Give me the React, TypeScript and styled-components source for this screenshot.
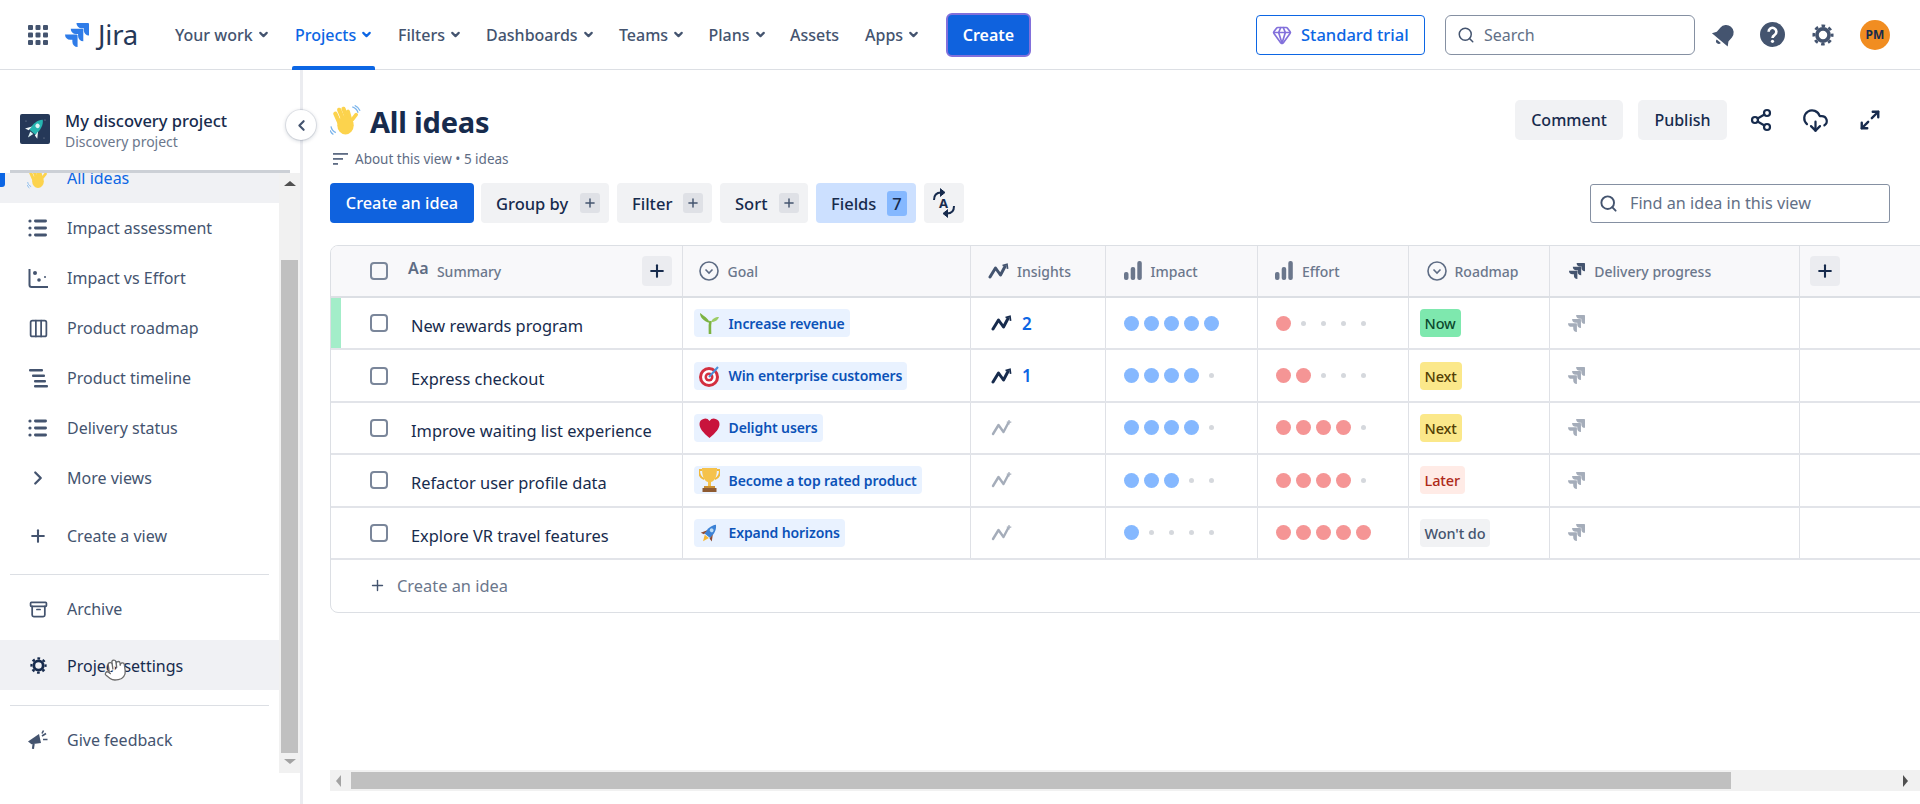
import React from 'react';
import styled, { createGlobalStyle } from 'styled-components';
import { Archive, ChevronDown, ChevronLeft, ChevronRight, CloudDownload, Columns3, Gem, Hand, Maximize2, Plus, Search, Share2 } from 'lucide-react';

const Global = createGlobalStyle`
  html, body { margin: 0; padding: 0; height: 100%; background: #fff; }
  body { font-family: "Noto Sans", "Open Sans", sans-serif; color: #172b4d; overflow: hidden; }
  * { box-sizing: border-box; }
`;

const Page = styled.div`display: flex; flex-direction: column; height: 100vh; overflow: hidden;`;

/* ---------- top bar ---------- */
const TopBar = styled.header`
  display: flex; align-items: center; height: 70px; flex: none; padding: 0 30px 0 28px;
  border-bottom: 1px solid #dcdfe4;
`;
const BrandBox = styled.div`display: flex; align-items: center; width: 144px; flex: none;`;
const JiraWord = styled.span`font-size: 27.5px; color: #253858; margin-left: 9px; letter-spacing: -0.2px;`;
const NavItem = styled.div<{ $w: number; $active?: boolean }>`
  position: relative; display: flex; align-items: center; gap: 4px; height: 70px; width: ${p => p.$w}px; flex: none;
  padding-left: 3px; font-size: 16px; font-weight: 500; letter-spacing: 0;
  color: ${p => (p.$active ? '#0c66e4' : '#44546f')};
  &::after {
    content: ''; display: ${p => (p.$active ? 'block' : 'none')};
    position: absolute; left: 0; bottom: 0; width: 83px; height: 4px; background: #0c66e4; border-radius: 2px 2px 0 0;
  }
`;
const CreateButton = styled.button`
  width: 85px; height: 44px; flex: none; border: 2px solid #8270db; border-radius: 6px; background: #0f62de; color: #fff;
  font: 600 16px "Noto Sans", sans-serif;
`;
const TrialButton = styled.button`
  display: flex; align-items: center; gap: 9px; width: 169px; height: 40px; margin-left: auto; padding: 0 0 0 15px; background: #fff;
  border: 1px solid #0c66e4; border-radius: 4px; color: #0c66e4; font: 500 16.5px "Noto Sans", sans-serif;
`;
const GlobalSearch = styled.div`
  display: flex; align-items: center; gap: 9px; width: 250px; height: 40px; margin-left: 20px; padding-left: 11px;
  border: 1px solid #8590a2; border-radius: 6px; font-size: 16px; color: #626f86;
`;
const TopIcons = styled.div`display: flex; align-items: center; margin-left: 18px;`;
const TopIconBox = styled.span<{ $w: number }>`display: flex; align-items: center; width: ${p => p.$w}px; flex: none;`;
const Avatar = styled.span`
  display: flex; align-items: center; justify-content: center; width: 30px; height: 30px; border-radius: 50%;
  background: #f18d21; color: #172b4d; font-size: 12px; font-weight: 700;
`;

/* ---------- sidebar ---------- */
const Body = styled.div`display: flex; flex: 1; min-height: 0;`;
const Sidebar = styled.aside`
  position: relative; display: flex; flex-direction: column; width: 303px; flex: none; border-right: 3px solid #ebecf0;
`;
const ProjectHeader = styled.div`
  display: flex; align-items: flex-start; gap: 15px; height: 100px; flex: none; padding: 44px 0 0 20px;
`;
const ProjectText = styled.div`display: flex; flex-direction: column; margin-top: -5px;`;
const ProjectName = styled.span`font-size: 16.5px; font-weight: 500; line-height: 24px; color: #172b4d;`;
const ProjectKind = styled.span`font-size: 14px; line-height: 18px; color: #6b778c;`;
const HeaderShadow = styled.div`height: 3px; flex: none; margin: 0 10px; background: #ccd0d6;`;
const SideScroll = styled.div`display: flex; height: 600px; flex: none;`;
const SideList = styled.nav`width: 279px; flex: none; overflow: hidden;`;
const SideInner = styled.div`margin-top: -20px;`;
const SideRow = styled.div<{ $active?: boolean; $hover?: boolean; $mt?: number }>`
  position: relative; display: flex; align-items: center; height: 50px; padding-left: 26px; margin-top: ${p => p.$mt ?? 0}px;
  background: ${p => (p.$active || p.$hover ? '#f0f1f4' : 'transparent')};
  color: ${p => (p.$active ? '#0c66e4' : p.$hover ? '#172b4d' : '#44546f')};
  font-size: 16px;
  &::before {
    content: ''; display: ${p => (p.$active ? 'block' : 'none')};
    position: absolute; left: 0; top: 16px; width: 5px; height: 18px; background: #0c66e4; border-radius: 0 3px 3px 0;
  }
`;
const SideIcon = styled.span`display: flex; align-items: center; justify-content: center; width: 24px; margin-right: 17px; flex: none;`;
const SideLabel = styled.span<{ $dy?: number }>`margin-top: ${p => p.$dy ?? 0}px;`;
const Divider = styled.div<{ $mt: number }>`height: 1px; margin: ${p => p.$mt}px 10px 9px; background: #dcdfe4;`;
const Cursor = styled.span`position: absolute; left: 103px; top: 18px; display: flex; transform: rotate(-8deg);`;
const VTrack = styled.div`
  display: flex; flex-direction: column; align-items: center; width: 21px; flex: none; background: #f1f1f1;
`;
const ArrowUp = styled.span`margin: 8px 0 0; width: 0; height: 0; border: 6px solid transparent; border-top: 0; border-bottom: 5px solid #505050;`;
const ArrowDown = styled.span`width: 0; height: 0; margin-top: 6px; border: 6px solid transparent; border-bottom: 0; border-top: 5px solid #a3a3a3;`;
const VThumb = styled.div`width: 17px; height: 493px; margin-top: 74px; background: #c0c0c0;`;
const CollapseButton = styled.button`
  position: absolute; left: 286px; top: 40px; display: flex; align-items: center; justify-content: center; padding: 0;
  width: 30px; height: 30px; border-radius: 50%; background: #fff; border: 0; color: #44546f;
  box-shadow: 0 0 0 1px rgba(9,30,66,.08), 0 1px 4px rgba(9,30,66,.22);
`;

/* ---------- main ---------- */
const Main = styled.main`display: flex; flex-direction: column; flex: 1; min-width: 0; overflow: hidden; padding-left: 27px;`;
const TitleRow = styled.div`display: flex; align-items: center; margin-top: 30px; height: 40px; flex: none; padding-right: 28px;`;
const Title = styled.h1`margin: 2px 0 0 9px; font-size: 29px; font-weight: 700; color: #172b4d; letter-spacing: -0.2px;`;
const TitleActions = styled.div`display: flex; align-items: center; margin-left: auto;`;
const GreyButton = styled.button<{ $w: number; $mr: number }>`
  width: ${p => p.$w}px; height: 40px; margin-right: ${p => p.$mr}px; border: 0; border-radius: 5px; background: #f1f2f4; color: #172b4d;
  font: 500 16px "Noto Sans", sans-serif; padding: 0;
`;
const ActionIcon = styled.span<{ $w: number }>`display: flex; justify-content: center; width: ${p => p.$w}px; flex: none; color: #172b4d;`;
const AboutRow = styled.div`display: flex; align-items: center; gap: 7px; height: 20px; margin: 9px 0 0 3px; flex: none; font-size: 13.5px; color: #5e6c84;`;
const Toolbar = styled.div`display: flex; align-items: center; height: 40px; margin-top: 14px; flex: none; padding-right: 31px;`;
const PrimaryButton = styled.button`
  width: 144px; height: 40px; margin-right: 7px; border: 0; border-radius: 4px; background: #0f62de; color: #fff;
  font: 500 16.3px "Noto Sans", sans-serif; padding: 0;
`;
const ToolButton = styled.button<{ $w: number; $on?: boolean }>`
  display: flex; align-items: center; justify-content: space-between; width: ${p => p.$w}px; height: 40px; margin-right: 8px; padding: 0 9px 0 15px;
  border: 0; border-radius: 4px; background: ${p => (p.$on ? '#cce0ff' : '#f1f2f4')}; color: #172b4d;
  font: 500 16.5px "Noto Sans", sans-serif;
`;
const PlusBox = styled.span`display: flex; align-items: center; justify-content: center; width: 20px; height: 20px; border-radius: 3px; background: #dfe1e6; color: #44546f;`;
const CountBox = styled.span`display: flex; align-items: center; justify-content: center; width: 20px; height: 25px; border-radius: 3px; background: #85b8ff; color: #172b4d;`;
const IconTool = styled.button`
  display: flex; align-items: center; justify-content: center; width: 40px; height: 40px; padding: 0; border: 0; border-radius: 4px; background: #f1f2f4; color: #172b4d;
`;
const FindBox = styled.div`
  display: flex; align-items: center; gap: 12px; width: 300px; height: 39px; margin-left: auto; padding-left: 8px; margin-right: -1px;
  border: 1px solid #8590a2; border-radius: 3px; font-size: 16.2px; color: #626f86;
`;

/* ---------- table ---------- */
const Table = styled.section`
  width: 1620px; flex: none; margin-top: 22px; border: 1px solid #dcdfe4; border-radius: 8px 0 0 8px; overflow: hidden;
`;
const columns = '351.5px 288.5px 134.5px 152.5px 150.5px 141.7px 250px 1fr';
const HeadRow = styled.div`
  display: grid; grid-template-columns: ${columns}; height: 52px; background: #f8f8fa; border-bottom: 2px solid #dcdfe4;
`;
const DataRow = styled.div`
  display: grid; grid-template-columns: ${columns}; height: 52.4px; border-bottom: 2px solid #e2e4e9;
`;
const Cell = styled.div<{ $pl: number; $bar?: boolean }>`
  display: flex; align-items: center; min-width: 0; padding-left: ${p => p.$pl}px; border-right: 1px solid #dfe1e6;
  box-shadow: ${p => (p.$bar ? 'inset 10px 0 0 #a3edc9' : 'none')};
  &:last-child { border-right: 0; }
`;
const HeadCell = styled(Cell)<{ $gap: number }>`
  gap: ${p => p.$gap}px; font-size: 14px; font-weight: 500; color: #6b778c;
`;
const Check = styled.span`display: block; width: 18px; height: 18px; flex: none; border: 2px solid #7a869a; border-radius: 4px;`;
const AaMark = styled.span`margin-left: 20px; margin-top: -6px; font-size: 16px; font-weight: 600; color: #5e6c84; letter-spacing: 0.4px;`;
const HeadSpacer = styled.span`margin-left: auto;`;
const AddBox = styled.span<{ $mr: number }>`
  display: flex; align-items: center; justify-content: center; width: 30px; height: 30px; flex: none; margin-right: ${p => p.$mr}px; border-radius: 4px; background: #ebecf0; color: #172b4d;
`;
const IdeaTitle = styled.span`margin: 5px 0 0 23px; font-size: 16.4px; color: #172b4d; white-space: nowrap;`;
const GoalChip = styled.span`
  display: inline-flex; align-items: center; gap: 9px; height: 28px; padding: 0 5px; border-radius: 4px; background: #e9f2ff;
  color: #0c52b8; font-size: 14px; font-weight: 600; white-space: nowrap; letter-spacing: -0.1px;
`;
const InsightNum = styled.span`margin-left: 10px; font-size: 17px; font-weight: 600; color: #0c66e4;`;
const Dots = styled.div`display: flex;`;
const DotSlot = styled.span`display: flex; align-items: center; justify-content: center; width: 20px; height: 20px;`;
const Dot = styled.span<{ $on: boolean; $c: string }>`
  display: block; width: ${p => (p.$on ? 15 : 5)}px; height: ${p => (p.$on ? 15 : 5)}px; border-radius: 50%;
  background: ${p => (p.$on ? p.$c : '#d5d8dd')};
`;
const Lozenge = styled.span<{ $bg: string; $fg: string }>`
  display: inline-flex; align-items: center; height: 28px; padding: 0 5px; border-radius: 4px; background: ${p => p.$bg}; color: ${p => p.$fg};
  font-size: 14.5px; font-weight: 500; white-space: nowrap; letter-spacing: -0.1px;
`;
const CreateRow = styled.div`display: flex; align-items: center; gap: 11px; height: 52px; padding-left: 38px; font-size: 16.4px; color: #6b778c;`;

const HScroll = styled.div`
  display: flex; align-items: center; height: 21px; margin-top: auto; margin-bottom: 13px; flex: none; background: #f1f1f1; padding-left: 6px;
`;
const ArrowLeft = styled.span`width: 0; height: 0; border: 6px solid transparent; border-left: 0; border-right: 5px solid #a3a3a3;`;
const HThumb = styled.div`width: 1380px; height: 17px; margin-left: 10px; background: #c0c0c0;`;
const ArrowRight = styled.span`width: 0; height: 0; margin-left: auto; margin-right: 12px; border: 6px solid transparent; border-right: 0; border-left: 5px solid #505050;`;

/* ---------- drawn icons ---------- */
const JIRA_PATH = 'M11.571 11.513H0a5.218 5.218 0 0 0 5.232 5.215h2.13v2.057A5.215 5.215 0 0 0 12.575 24V12.518a1.005 1.005 0 0 0-1.005-1.005zm5.723-5.756H5.736a5.215 5.215 0 0 0 5.215 5.214h2.129v2.058a5.218 5.218 0 0 0 5.215 5.214V6.758a1.001 1.001 0 0 0-1.001-1.001zM23.013 0H11.455a5.215 5.215 0 0 0 5.215 5.215h2.129v2.057A5.215 5.215 0 0 0 24 12.483V1.005A1.001 1.001 0 0 0 23.013 0Z';
const JiraMark = ({ s, c }: { s: number; c: string }) => (
  <svg width={s} height={s} viewBox="0 0 24 24"><path d={JIRA_PATH} fill={c} /></svg>
);
const Waffle = () => (
  <svg width="20" height="20" viewBox="0 0 20 20" fill="#44546f">
    {[0, 7.5, 15].flatMap(y => [0, 7.5, 15].map(x => <rect key={`${x}-${y}`} x={x} y={y} width="5" height="5" rx="1" />))}
  </svg>
);
const Bell = () => (
  <svg width="26" height="28" viewBox="0 0 24 24" fill="#44546f" style={{ marginLeft: -2 }}>
    <g transform="rotate(40 12 12)">
      <path d="M12 2a7 7 0 0 0-7 7v5l-2.500 4h19L19 14V9a7 7 0 0 0-7-7z" />
      <path d="M9.500 19.500h5a2.500 2.500 0 0 1-5 0z" />
    </g>
  </svg>
);
const Help = () => (
  <svg width="25" height="25" viewBox="0 0 25 25">
    <circle cx="12.500" cy="12.500" r="12.500" fill="#44546f" />
    <path d="M8.600 9.800a3.900 3.900 0 1 1 6 3.200c-1.300.9-2.100 1.400-2.100 3" fill="none" stroke="#fff" strokeWidth="2.600" />
    <circle cx="12.500" cy="19.300" r="1.600" fill="#fff" />
  </svg>
);
const Gear = ({ s, c }: { s: number; c: string }) => (
  <svg width={s} height={s} viewBox="0 0 24 24" fill="none" stroke={c}>
    <circle cx="12" cy="12" r="6.600" strokeWidth="4" />
    <circle cx="12" cy="12" r="10" strokeWidth="3" strokeDasharray="3.93 3.93" strokeDashoffset="1.96" />
  </svg>
);
const ListIcon = () => (
  <svg width="20" height="20" viewBox="0 0 20 20" fill="#44546f">
    {[3, 10, 17].map(y => (
      <g key={y}>
        <circle cx="2" cy={y} r="1.600" />
        <rect x="6" y={y - 1.5} width="13" height="3" rx="1.400" />
      </g>
    ))}
  </svg>
);
const ScatterIcon = () => (
  <svg width="21" height="21" viewBox="0 0 21 21" fill="#44546f">
    <path d="M1.500 1v16a2 2 0 0 0 2 2H20" fill="none" stroke="#44546f" strokeWidth="2" />
    <circle cx="7" cy="5" r="2" /><circle cx="11" cy="12" r="1.800" /><circle cx="17" cy="9" r="1" />
  </svg>
);
const TimelineIcon = () => (
  <svg width="21" height="20" viewBox="0 0 21 20" fill="#44546f">
    <rect x="1" y="1" width="14" height="2.400" rx="1" /><rect x="4" y="6.500" width="13" height="2.400" rx="1" />
    <rect x="6" y="12" width="12" height="2.400" rx="1" /><rect x="6" y="17" width="14" height="2.400" rx="1" />
  </svg>
);
const Megaphone = () => (
  <svg width="20" height="20" viewBox="0 0 20 20" fill="#44546f">
    <path d="M0 11.500L11 4l2 9-9.500 1.200z" />
    <path d="M4.500 14l-.6 4.800 2.100.2.7-5z" />
    <path d="M14 6l4-2.500M15 9.500h4.500M14 3.500l1.500-3" stroke="#44546f" strokeWidth="1.600" fill="none" />
  </svg>
);
const Insight = ({ c, plus }: { c: string; plus?: boolean }) => (
  <svg width="21" height="20" viewBox="0 0 21 20" fill="none" stroke={c} strokeWidth={plus ? 2.4 : 3}>
    <path d="M2 16L7.500 7l5 7L17 5.500" strokeLinejoin="round" strokeLinecap="round" />
    {plus ? <path d="M18 2v4.500M15.800 4.200h4.500" strokeWidth="1.300" /> : <path d="M14.500 4.500l4.500-1.200.6 4.500" strokeWidth="1.700" />}
  </svg>
);
const BarsIcon = () => (
  <svg width="18" height="20" viewBox="0 0 18 20" fill="#6b778c">
    <rect x="0" y="11" width="4.500" height="8" rx="2" /><rect x="6.700" y="6" width="4.500" height="13" rx="2" /><rect x="13.300" y="0" width="4.500" height="19" rx="2" />
  </svg>
);
const SelectIcon = () => (
  <svg width="20" height="20" viewBox="0 0 20 20" fill="none" stroke="#5e6c84" strokeWidth="1.600">
    <circle cx="10" cy="10" r="9" /><path d="M6.500 8.500L10 12l3.500-3.500" />
  </svg>
);
const SortAz = () => (
  <svg width="26" height="30" viewBox="0 0 26 30" fill="none" stroke="#172b4d" strokeWidth="2">
    <path d="M3 12C3 7 6 4.500 10 4.500" /><path d="M9 .5l5 4-5 4" fill="#172b4d" strokeWidth="1" />
    <path d="M23 18c0 5-3 7.500-7 7.500" /><path d="M17 21.500l-5 4 5 4" fill="#172b4d" strokeWidth="1" />
    <text x="8" y="20" fontSize="13" fontWeight="700" fontFamily="Noto Sans" fill="#172b4d" stroke="none">A</text>
  </svg>
);
const Hamburger = () => (
  <svg width="15" height="12" viewBox="0 0 15 12" fill="#5e6c84">
    <rect width="15" height="1.800" /><rect y="5" width="10" height="1.800" /><rect y="10" width="5" height="1.800" />
  </svg>
);
const WaveHand = ({ s }: { s: number }) => (
  <svg width={s} height={s} viewBox="0 0 32 32">
    <g stroke="#fcd34d" strokeWidth="4.400" strokeLinecap="round">
      <path d="M10 19L5.500 9" /><path d="M14 16L9.500 5" /><path d="M18 15L14 4" /><path d="M21 16L18.500 7" />
    </g>
    <ellipse cx="16" cy="21" rx="8.500" ry="9.500" fill="#fcd34d" />
    <path d="M23 15l4-5" stroke="#fcd34d" strokeWidth="3.800" strokeLinecap="round" />
    <path d="M23 2c3 1 5 3 6 6M25.500.5c2.500 1 4.500 3 5.500 5.500M1 22c.5 3 2 5 5 6.500M0 26c.8 2 2 3.500 3.500 4.500" stroke="#7cb5ec" strokeWidth="1.300" fill="none" />
  </svg>
);
const ProjectLogo = () => (
  <svg width="30" height="30" viewBox="0 0 30 30">
    <rect width="30" height="30" rx="2" fill="#253858" />
    <g transform="rotate(40 15 15)">
      <path d="M15 3c4 3.500 5 9 4 16h-8c-1-7 0-12.500 4-16z" fill="#26b5b0" />
      <circle cx="15" cy="11" r="2.200" fill="#dff5f5" />
      <path d="M11 15l-4 6 4-1zM19 15l4 6-4-1z" fill="#eef6f8" />
      <path d="M13 20h4l-2 6z" fill="#dff5f5" />
    </g>
    <circle cx="6" cy="7" r=".6" fill="#8993a4" /><circle cx="24" cy="24" r=".6" fill="#8993a4" /><circle cx="25" cy="6" r=".6" fill="#8993a4" />
  </svg>
);
const Seedling = () => (
  <svg width="21" height="24" viewBox="0 0 21 24" fill="none">
    <path d="M11 23c0-6-.5-9 .5-13" stroke="#7cb342" strokeWidth="2.600" />
    <path d="M11 12C9 7 5 5 1 2c0 4 3 8 10 10z" fill="#7cb342" />
    <path d="M12 11c1-3 4-5 8-5-1 3-4 5-8 5z" fill="#9ccc65" />
  </svg>
);
const Target = () => (
  <svg width="21" height="22" viewBox="0 0 21 22">
    <circle cx="10" cy="12" r="10" fill="#d32f3f" /><circle cx="10" cy="12" r="7" fill="#fff" />
    <circle cx="10" cy="12" r="4.500" fill="#d32f3f" /><circle cx="10" cy="12" r="2" fill="#fff" />
    <path d="M10 12L19 2" stroke="#4a8fd8" strokeWidth="2" />
  </svg>
);
const Heart = () => (
  <svg width="21" height="22" viewBox="0 0 21 22">
    <path d="M10.500 21C4 15.500.5 11.500.5 7A5.500 5.500 0 0 1 10.500 4a5.500 5.500 0 0 1 10 3c0 4.500-3.500 8.500-10 14z" fill="#c8143c" />
  </svg>
);
const Trophy = () => (
  <svg width="21" height="25" viewBox="0 0 21 25">
    <path d="M3 2H0c0 5 2 8 5 9M18 2h3c0 5-2 8-5 9" fill="none" stroke="#f0b93c" strokeWidth="2" />
    <path d="M3 0h15c0 8-2 13-6 14v4H9v-4C5 13 3 8 3 0z" fill="#f5c24c" />
    <rect x="5" y="18" width="11" height="2" fill="#c98f33" /><rect x="3.500" y="20" width="14" height="4" fill="#8d5a32" />
  </svg>
);
const RocketEmoji = () => (
  <svg width="21" height="24" viewBox="0 0 24 24">
    <g transform="rotate(38 12 12)">
      <path d="M12 0c4 4 5 9 4 16H8C7 9 8 4 12 0z" fill="#3b82d6" />
      <circle cx="12" cy="8" r="2.200" fill="#bcdcf6" />
      <path d="M8 11l-4 7 4-1zM16 11l4 7-4-1z" fill="#8d4a32" />
      <path d="M9 17h6l-3 7z" fill="#f7b731" />
    </g>
  </svg>
);

const P = ({ s = 14 }: { s?: number }) => <Plus size={s} strokeWidth={2.5} />;
const NavChevron = () => <ChevronDown size={13} strokeWidth={4} />;

/* ---------- data ---------- */
type Idea = { title: string; goal: string; emoji: React.ReactNode; insights?: number; impact: number; effort: number; road: [string, string, string]; bar?: boolean };
const ideas: Idea[] = [
  { title: 'New rewards program', goal: 'Increase revenue', emoji: <Seedling />, insights: 2, impact: 5, effort: 1, road: ['Now', '#7ee8ae', '#0b4a2e'], bar: true },
  { title: 'Express checkout', goal: 'Win enterprise customers', emoji: <Target />, insights: 1, impact: 4, effort: 2, road: ['Next', '#fbe88a', '#533f04'] },
  { title: 'Improve waiting list experience', goal: 'Delight users', emoji: <Heart />, impact: 4, effort: 4, road: ['Next', '#fbe88a', '#533f04'] },
  { title: 'Refactor user profile data', goal: 'Become a top rated product', emoji: <Trophy />, impact: 3, effort: 4, road: ['Later', '#ffebe6', '#ae2a19'] },
  { title: 'Explore VR travel features', goal: 'Expand horizons', emoji: <RocketEmoji />, impact: 1, effort: 5, road: ["Won't do", '#f1f2f4', '#44546f'] },
];
const nav: [string, number, boolean][] = [
  ['Your work', 120, true], ['Projects', 103, true], ['Filters', 88, true], ['Dashboards', 133, true],
  ['Teams', 89.5, true], ['Plans', 81.5, true], ['Assets', 75, false], ['Apps', 84, true],
];
const DotRow = ({ n, c }: { n: number; c: string }) => (
  <Dots>{[0, 1, 2, 3, 4].map(i => <DotSlot key={i}><Dot $on={i < n} $c={c} /></DotSlot>)}</Dots>
);

export default function App() {
  return (
    <Page>
      <Global />
      <TopBar>
        <BrandBox>
          <Waffle />
          <span style={{ width: 17 }} />
          <JiraMark s={24} c="#2f7ce8" />
          <JiraWord>Jira</JiraWord>
        </BrandBox>
        {nav.map(([label, w, chev]) => (
          <NavItem key={label} $w={w} $active={label === 'Projects'}>{label}{chev && <NavChevron />}</NavItem>
        ))}
        <CreateButton>Create</CreateButton>
        <TrialButton><Gem size={20} color="#8270db" />Standard trial</TrialButton>
        <GlobalSearch><Search size={18} color="#44546f" />Search</GlobalSearch>
        <TopIcons>
          <TopIconBox $w={47}><Bell /></TopIconBox>
          <TopIconBox $w={52}><Help /></TopIconBox>
          <TopIconBox $w={48}><Gear s={22} c="#44546f" /></TopIconBox>
          <Avatar>PM</Avatar>
        </TopIcons>
      </TopBar>
      <Body>
        <Sidebar>
          <ProjectHeader>
            <ProjectLogo />
            <ProjectText>
              <ProjectName>My discovery project</ProjectName>
              <ProjectKind>Discovery project</ProjectKind>
            </ProjectText>
          </ProjectHeader>
          <HeaderShadow />
          <SideScroll>
            <SideList>
              <SideInner>
                <SideRow $active><SideIcon><WaveHand s={22} /></SideIcon>All ideas</SideRow>
                <SideRow><SideIcon><ListIcon /></SideIcon>Impact assessment</SideRow>
                <SideRow><SideIcon><ScatterIcon /></SideIcon>Impact vs Effort</SideRow>
                <SideRow><SideIcon><Columns3 size={21} color="#44546f" strokeWidth={2} /></SideIcon>Product roadmap</SideRow>
                <SideRow><SideIcon><TimelineIcon /></SideIcon>Product timeline</SideRow>
                <SideRow><SideIcon><ListIcon /></SideIcon>Delivery status</SideRow>
                <SideRow><SideIcon><ChevronRight size={22} color="#44546f" strokeWidth={2.5} /></SideIcon>More views</SideRow>
                <SideRow $mt={8}><SideIcon><Plus size={20} color="#44546f" strokeWidth={2.5} /></SideIcon>Create a view</SideRow>
                <Divider $mt={13} />
                <SideRow><SideIcon><Archive size={19} color="#44546f" strokeWidth={2.2} /></SideIcon>Archive</SideRow>
                <SideRow $mt={6} $hover>
                  <SideIcon><Gear s={17} c="#172b4d" /></SideIcon>
                  <SideLabel $dy={2}>Project settings</SideLabel>
                  <Cursor><Hand size={24} color="#6b6b6b" fill="#fff" strokeWidth={1.3} /></Cursor>
                </SideRow>
                <Divider $mt={15} />
                <SideRow><SideIcon><Megaphone /></SideIcon>Give feedback</SideRow>
              </SideInner>
            </SideList>
            <VTrack>
              <ArrowUp />
              <VThumb />
              <ArrowDown />
            </VTrack>
          </SideScroll>
          <CollapseButton><ChevronLeft size={17} strokeWidth={3} /></CollapseButton>
        </Sidebar>
        <Main>
          <TitleRow>
            <WaveHand s={31} />
            <Title>All ideas</Title>
            <TitleActions>
              <GreyButton $w={108} $mr={15}>Comment</GreyButton>
              <GreyButton $w={89} $mr={12}>Publish</GreyButton>
              <ActionIcon $w={44}><Share2 size={24} strokeWidth={2.2} /></ActionIcon>
              <ActionIcon $w={65}><CloudDownload size={27} strokeWidth={2} /></ActionIcon>
              <ActionIcon $w={44}><Maximize2 size={22} strokeWidth={2.6} /></ActionIcon>
            </TitleActions>
          </TitleRow>
          <AboutRow><Hamburger />About this view • 5 ideas</AboutRow>
          <Toolbar>
            <PrimaryButton>Create an idea</PrimaryButton>
            <ToolButton $w={128}>Group by<PlusBox><P /></PlusBox></ToolButton>
            <ToolButton $w={95}>Filter<PlusBox><P /></PlusBox></ToolButton>
            <ToolButton $w={88}>Sort<PlusBox><P /></PlusBox></ToolButton>
            <ToolButton $w={100} $on>Fields<CountBox>7</CountBox></ToolButton>
            <IconTool><SortAz /></IconTool>
            <FindBox><Search size={19} color="#44546f" strokeWidth={2.4} />Find an idea in this view</FindBox>
          </Toolbar>
          <Table>
            <HeadRow>
              <HeadCell $pl={39} $gap={0}>
                <Check /><AaMark>Aa</AaMark><span style={{ width: 8 }} />Summary<HeadSpacer /><AddBox $mr={10}><P s={20} /></AddBox>
              </HeadCell>
              <HeadCell $pl={16} $gap={9}><SelectIcon />Goal</HeadCell>
              <HeadCell $pl={17} $gap={8}><Insight c="#44546f" />Insights</HeadCell>
              <HeadCell $pl={18} $gap={9}><BarsIcon />Impact</HeadCell>
              <HeadCell $pl={17} $gap={9}><BarsIcon />Effort</HeadCell>
              <HeadCell $pl={18} $gap={8}><SelectIcon />Roadmap</HeadCell>
              <HeadCell $pl={19} $gap={9}><JiraMark s={16} c="#44546f" />Delivery progress</HeadCell>
              <HeadCell $pl={10} $gap={0}><AddBox $mr={0}><P s={20} /></AddBox></HeadCell>
            </HeadRow>
            {ideas.map(i => (
              <DataRow key={i.title}>
                <Cell $pl={39} $bar={i.bar}><Check /><IdeaTitle>{i.title}</IdeaTitle></Cell>
                <Cell $pl={11}><GoalChip>{i.emoji}{i.goal}</GoalChip></Cell>
                <Cell $pl={20}>
                  <Insight c={i.insights ? '#172b4d' : '#a5adba'} plus={!i.insights} />
                  {i.insights && <InsightNum>{i.insights}</InsightNum>}
                </Cell>
                <Cell $pl={16}><DotRow n={i.impact} c="#85b8ff" /></Cell>
                <Cell $pl={15.5}><DotRow n={i.effort} c="#f59595" /></Cell>
                <Cell $pl={11}><Lozenge $bg={i.road[1]} $fg={i.road[2]}>{i.road[0]}</Lozenge></Cell>
                <Cell $pl={18}><JiraMark s={17} c="#a5adba" /></Cell>
                <Cell $pl={0} />
              </DataRow>
            ))}
            <CreateRow><Plus size={17} color="#44546f" strokeWidth={2} />Create an idea</CreateRow>
          </Table>
          <HScroll>
            <ArrowLeft />
            <HThumb />
            <ArrowRight />
          </HScroll>
        </Main>
      </Body>
    </Page>
  );
}
